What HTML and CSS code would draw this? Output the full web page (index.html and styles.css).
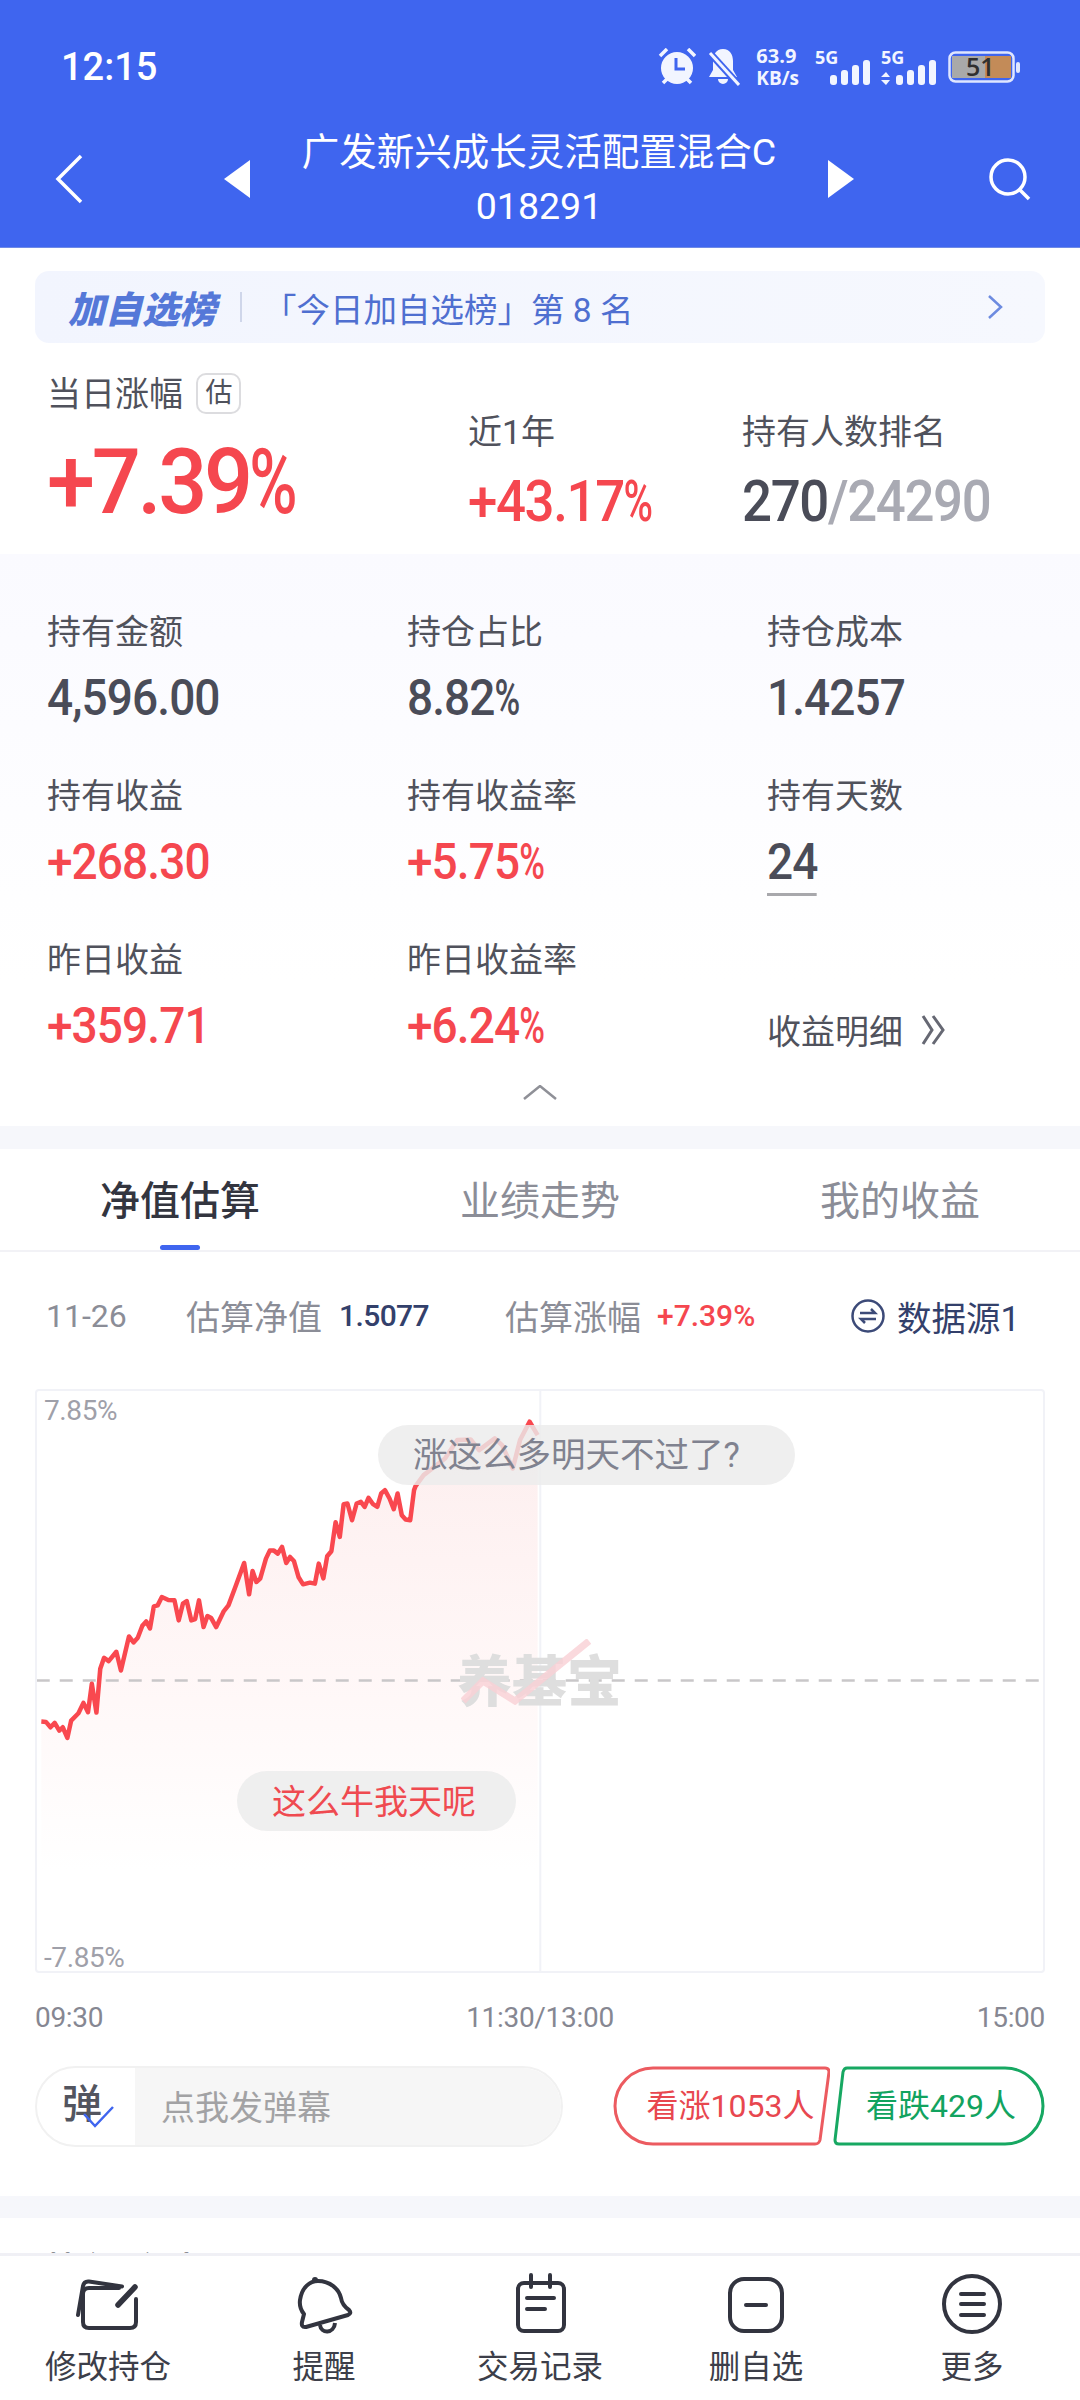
FILE: index.html
```html
<!DOCTYPE html>
<html lang="zh-CN">
<head>
  <meta charset="UTF-8" />
  <title>广发新兴成长灵活配置混合C</title>
  <link rel="stylesheet" href="styles.css">
</head>
<body>

  <header class="top">
    <div class="status-bar">
      <span class="time">12:15</span>
      <div class="status-icons">
        <svg width="38" height="38" viewBox="0 0 38 38">
          <circle cx="19" cy="20" r="16" fill="#f2f5ff"/>
          <path d="M2 8 9 1M30 1l7 7M5 35l4-4M33 35l-4-4" stroke="#f2f5ff" stroke-width="3.5" fill="none"/>
          <path d="M18 10v11h9" stroke="#3f65ef" stroke-width="3" fill="none"/>
        </svg>
        <svg width="32" height="38" viewBox="0 0 32 38">
          <path d="M15 1C8 1 5 7 5 13v9l-4 7h28l-4-7v-9C25 7 22 1 15 1zM10 31a5 5 0 0 0 10 0z" fill="#f2f5ff"/>
          <path d="M1 4l29 32" stroke="#3f65ef" stroke-width="7"/>
          <path d="M2 5l29 32" stroke="#f2f5ff" stroke-width="3"/>
        </svg>
        <div class="speed">
          <span>63.9</span>
          <span class="speed-unit">KB/s</span>
        </div>
        <svg class="signals" width="121" height="41" viewBox="0 -5 121 41">
          <text x="0" y="15">5G</text>
          <text x="66" y="15">5G</text>
          <g fill="#f2f5ff">
            <rect x="15" y="26" width="7" height="10" rx="3"/>
            <rect x="26" y="21" width="7" height="15" rx="3"/>
            <rect x="37" y="16" width="7" height="20" rx="3"/>
            <rect x="48" y="11" width="7" height="25" rx="3"/>
            <rect x="81" y="26" width="7" height="10" rx="3"/>
            <rect x="92" y="21" width="7" height="15" rx="3"/>
            <rect x="103" y="16" width="7" height="20" rx="3"/>
            <rect x="114" y="11" width="7" height="25" rx="3"/>
            <path d="M71 23l4 5h-9zM71 36l4-5h-9z"/>
          </g>
        </svg>
        <svg class="battery" width="72" height="34" viewBox="0 0 72 34">
          <rect x="1.5" y="2.5" width="64" height="29" rx="6" fill="none" stroke="#dfe6ff" stroke-width="2.5"/>
          <rect x="4" y="6" width="33" height="22" fill="#a9a9a9"/>
          <rect x="37" y="6" width="26" height="22" fill="#c38b58"/>
          <rect x="68" y="12" width="4" height="11" rx="2" fill="#dfe6ff"/>
          <text x="18" y="26">51</text>
        </svg>
      </div>
    </div>
    <div class="nav-bar">
      <svg class="back" width="28" height="50" viewBox="0 0 28 50">
        <path d="M26 2 3 25l23 23" fill="none" stroke="#fff" stroke-width="3.5"/>
      </svg>
      <svg class="prev" width="26" height="38" viewBox="0 0 26 38"><path d="M26 0v38L0 19z" fill="#fff"/></svg>
      <div class="fund-title">
        <div>广发新兴成长灵活配置混合C</div>
        <div>018291</div>
      </div>
      <svg class="next" width="26" height="38" viewBox="0 0 26 38"><path d="M0 0v38l26-19z" fill="#fff"/></svg>
      <svg class="search" width="44" height="44" viewBox="0 0 44 44">
        <circle cx="20" cy="20" r="17" fill="none" stroke="#fff" stroke-width="3.5"/>
        <path d="M32 33l9 9" stroke="#fff" stroke-width="3.5"/>
      </svg>
    </div>
  </header>

  <main class="content">
    <section class="summary">
      <div class="rank-banner">
        <span class="rank-logo">加自选榜</span>
        <span class="rank-sep"></span>
        <span class="rank-text">「今日加自选榜」第 8 名</span>
        <svg class="rank-arrow" width="16" height="24" viewBox="0 0 16 24">
          <path d="M2 1l12 11L2 23" fill="none" stroke="#6d8be0" stroke-width="2.5"/>
        </svg>
      </div>
      <div class="summary-stats">
        <div class="stat-main">
          <div class="label">当日涨幅 <span class="chip">估</span></div>
          <div class="big-rate">+7.39<span class="pct">%</span></div>
        </div>
        <div class="stat-side year">
          <div class="label">近1年</div>
          <div class="side-value red">+43.17<span class="pct">%</span></div>
        </div>
        <div class="stat-side">
          <div class="label">持有人数排名</div>
          <div class="side-value">270<span class="muted">/24290</span></div>
        </div>
      </div>
    </section>

    <section class="holdings">
      <div class="holdings-grid">
        <div><div class="label">持有金额</div><div class="value">4,596.00</div></div>
        <div><div class="label">持仓占比</div><div class="value">8.82<span class="pct">%</span></div></div>
        <div><div class="label">持仓成本</div><div class="value">1.4257</div></div>
        <div><div class="label">持有收益</div><div class="value red">+268.30</div></div>
        <div><div class="label">持有收益率</div><div class="value red">+5.75<span class="pct">%</span></div></div>
        <div><div class="label">持有天数</div><div class="value"><span class="underlined">24</span></div></div>
        <div><div class="label">昨日收益</div><div class="value red">+359.71</div></div>
        <div><div class="label">昨日收益率</div><div class="value red">+6.24<span class="pct">%</span></div></div>
        <div class="detail-link">
          <span class="label">收益明细</span>
          <svg width="26" height="32" viewBox="0 0 26 32">
            <path d="M3 2l9 14-9 14M13 2l10 14-10 14" fill="none" stroke="#666873" stroke-width="3"/>
          </svg>
        </div>
      </div>
      <svg class="collapse" width="34" height="15" viewBox="0 0 34 15">
        <path d="M1 14 17 1l16 13" fill="none" stroke="#8f9097" stroke-width="2.5"/>
      </svg>
    </section>

    <div class="band"></div>

    <nav class="tabs">
      <a class="tab active">净值估算</a>
      <a class="tab">业绩走势</a>
      <a class="tab">我的收益</a>
    </nav>

    <div class="estimate-row">
      <span class="est-date">11-26</span>
      <span class="est-label first">估算净值</span>
      <span class="est-nav">1.5077</span>
      <span class="est-label second">估算涨幅</span>
      <span class="est-rate">+7.39%</span>
      <span class="est-source">
        <svg width="36" height="36" viewBox="0 0 36 36">
          <circle cx="18" cy="18" r="15.5" fill="none" stroke="#3c4a78" stroke-width="2.5"/>
          <path d="M10 15h15l-4-4M26 21H11l4 4" fill="none" stroke="#3c4a78" stroke-width="2.5"/>
        </svg>
        数据源1
      </span>
    </div>

    <div class="chart">
      <svg class="chart-plot" viewBox="96.7 123 2629 1737" preserveAspectRatio="none">
        <defs>
          <linearGradient id="area" x1="0" y1="0" x2="0" y2="1">
            <stop offset="0" stop-color="#fdeeee"/>
            <stop offset="0.62" stop-color="#fff8f8"/>
            <stop offset="1" stop-color="#ffffff"/>
          </linearGradient>
        </defs>
        <polygon fill="url(#area)" points="108,1113 120,1114 132,1130 143,1117 155,1140 164,1130 176,1162 186,1110 205,1088 218,1057 230,1085 240,1000 252,1086 262,955 272,922 284,932 304,904 316,960 337,858 349,876 360,862 372,826 382,813 392,834 402,768 412,765 423,740 440,749 456,750 467,810 478,760 488,752 500,810 510,806 520,750 532,830 542,797 552,803 565,830 585,782 597,765 615,710 638,638 651,732 660,662 670,695 680,685 695,625 705,601 716,601 726,610 737,590 748,638 758,620 768,632 780,680 792,702 810,697 823,700 833,640 845,684 855,618 866,603 877,516 888,560 898,462 908,460 920,510 932,460 943,455 953,470 963,443 975,462 986,470 996,430 1006,420 1018,445 1029,477 1039,430 1050,495 1060,508 1072,510 1082,420 1086,408 1107,375 1163,325 1195,270 1230,268 1252,300 1293,265 1312,285 1340,355 1359,270 1384,215 1405,255 1405,1560 108,1560"/>
        <line class="grid-line" x1="1412" y1="123" x2="1412" y2="1860"/>
        <line class="zero-line" x1="96" y1="990" x2="2726" y2="990"/>
        <polyline class="price-line" points="108,1113 120,1114 132,1130 143,1117 155,1140 164,1130 176,1162 186,1110 205,1088 218,1057 230,1085 240,1000 252,1086 262,955 272,922 284,932 304,904 316,960 337,858 349,876 360,862 372,826 382,813 392,834 402,768 412,765 423,740 440,749 456,750 467,810 478,760 488,752 500,810 510,806 520,750 532,830 542,797 552,803 565,830 585,782 597,765 615,710 638,638 651,732 660,662 670,695 680,685 695,625 705,601 716,601 726,610 737,590 748,638 758,620 768,632 780,680 792,702 810,697 823,700 833,640 845,684 855,618 866,603 877,516 888,560 898,462 908,460 920,510 932,460 943,455 953,470 963,443 975,462 986,470 996,430 1006,420 1018,445 1029,477 1039,430 1050,495 1060,508 1072,510 1082,420 1086,408 1107,375 1163,325 1195,270 1230,268 1252,300 1293,265 1312,285 1340,355 1359,270 1384,215 1405,255"/>
      </svg>
      <span class="axis-top">7.85%</span>
      <span class="axis-bottom">-7.85%</span>
      <span class="watermark">养基宝</span>
      <svg class="swoosh" width="130" height="66" viewBox="0 0 130 66">
        <path d="M2 62l20-20 32 20L128 2" fill="none" stroke="#f9d0d4" stroke-opacity="0.8" stroke-width="7"/>
      </svg>
      <span class="danmu danmu-gray">涨这么多明天不过了?</span>
      <span class="danmu danmu-red">这么牛我天呢</span>
    </div>

    <div class="time-axis">
      <span>09:30</span>
      <span>11:30/13:00</span>
      <span>15:00</span>
    </div>

    <div class="action-row">
      <div class="danmu-input">
        <div class="danmu-toggle">
          弹
          <svg class="danmu-check" width="32" height="22" viewBox="0 0 32 22">
            <path d="M1 8l11 12L30 1" fill="none" stroke="#3f65ef" stroke-width="2.5"/>
          </svg>
        </div>
        <div class="danmu-placeholder">点我发弹幕</div>
      </div>
      <div class="votes">
        <div class="vote vote-up">
          <svg width="217" height="80" viewBox="0 0 217 80">
            <path d="M40 2h172q4 0 4 4l-9 68q-1 4-5 4H40a38 38 0 0 1 0-76z" fill="none" stroke="#ec5b60" stroke-width="3"/>
          </svg>
          <span>看涨1053人</span>
        </div>
        <div class="vote vote-down">
          <svg width="212" height="80" viewBox="0 0 212 80">
            <path d="M14 2h158a38 38 0 0 1 0 76H6q-4 0-4-4l8-68q1-4 4-4z" fill="none" stroke="#17a862" stroke-width="3"/>
          </svg>
          <span>看跌429人</span>
        </div>
      </div>
    </div>

    <div class="band band-low"></div>

    <section class="next-section">
      <span class="next-title">持仓明细表</span>
      <span class="next-more">近3月</span>
    </section>
  </main>

  <footer class="bottom-nav">
    <a class="nav-item">
      <svg width="64" height="64" viewBox="0 0 64 64">
        <path d="M60 27v23q0 6-6 6H13q-6 0-6-6V22q0-6 6-6h30" fill="none" stroke="#32343f" stroke-width="4" stroke-linecap="round"/>
        <path d="M2 43 7 14q1-5 6-4.500l33 5" fill="none" stroke="#32343f" stroke-width="4" stroke-linecap="round"/>
        <path d="M42 33l17-18" stroke="#32343f" stroke-width="5.500" stroke-linecap="round"/>
      </svg>
      <span>修改持仓</span>
    </a>
    <a class="nav-item">
      <svg width="64" height="64" viewBox="0 0 64 64">
        <path d="M13 55q-4 0-3-5l2-8Q7 36 8 28C10 15 18 9 26 9c12 0 21 8 23 17q1 7 8 12 3 3-1 5L14 55z" fill="none" stroke="#32343f" stroke-width="4" stroke-linejoin="round"/>
        <path d="M28 53c1 9 14 9 15-2" fill="none" stroke="#32343f" stroke-width="4"/>
        <circle cx="23" cy="8" r="3" fill="#32343f"/>
      </svg>
      <span>提醒</span>
    </a>
    <a class="nav-item">
      <svg width="64" height="64" viewBox="0 0 64 64">
        <rect x="10" y="11" width="46" height="48" rx="6" fill="none" stroke="#32343f" stroke-width="4"/>
        <path d="M23 3v12M42 3v12" stroke="#32343f" stroke-width="4" stroke-linecap="round"/>
        <path d="M19 26h27M19 37h18" stroke="#32343f" stroke-width="4" stroke-linecap="round"/>
      </svg>
      <span>交易记录</span>
    </a>
    <a class="nav-item">
      <svg width="64" height="64" viewBox="0 0 64 64">
        <rect x="6" y="7" width="52" height="52" rx="14" fill="none" stroke="#32343f" stroke-width="4"/>
        <path d="M22 33h20" stroke="#32343f" stroke-width="4" stroke-linecap="round"/>
      </svg>
      <span>删自选</span>
    </a>
    <a class="nav-item">
      <svg width="64" height="64" viewBox="0 0 64 64">
        <circle cx="32" cy="32" r="28" fill="none" stroke="#32343f" stroke-width="4"/>
        <path d="M21 22h23M21 32h23M21 43h23" stroke="#32343f" stroke-width="4" stroke-linecap="round"/>
      </svg>
      <span>更多</span>
    </a>
  </footer>

</body>
</html>
```

FILE: styles.css
```css
* {
  box-sizing: border-box;
}
body {
  margin: 0;
  width: 1080px;
  height: 2400px;
  overflow: hidden;
  display: flex;
  flex-direction: column;
  background: #fff;
  font-family: Roboto, "Noto Sans CJK SC", sans-serif;
  color: #4a4c58;
}
svg {
  display: block;
  flex-shrink: 0;
}

/* header */
.top {
  height: 248px;
  background: #3f65ef;
  border-bottom: 1px solid #6f8ae6;
  color: #fff;
}
.status-bar {
  height: 122px;
  padding: 11px 60px 0 61px;
  display: flex;
  align-items: center;
  justify-content: space-between;
}
.time {
  font-size: 38px;
  font-weight: 500;
}
.status-icons {
  display: flex;
  align-items: center;
  gap: 12px;
}
.speed {
  display: flex;
  flex-direction: column;
  margin: 0 4px;
  font-family: "Open Sans", sans-serif;
  font-size: 20px;
  font-weight: 700;
  line-height: 22px;
  color: #f2f5ff;
}
.speed-unit {
  font-size: 19px;
}
.signals {
  margin-bottom: 5px;
}
.signals text {
  font-family: "Open Sans", sans-serif;
  font-size: 18px;
  font-weight: 700;
  fill: #f2f5ff;
}
.battery text {
  font-family: "Open Sans", sans-serif;
  font-size: 25px;
  font-weight: 600;
  fill: #2f2f2f;
}
.nav-bar {
  display: flex;
  align-items: center;
  padding: 3px 48px 12px 55px;
}
.prev {
  margin-left: 141px;
}
.fund-title {
  width: 580px;
  text-align: center;
  font-size: 37.5px;
  line-height: 54px;
  white-space: nowrap;
}
.search {
  margin-left: 134px;
}

/* summary */
.content {
  flex: 1;
  overflow: hidden;
}
.summary {
  height: 306px;
  padding-top: 23px;
}
.rank-banner {
  height: 72px;
  margin: 0 35px;
  padding: 0 42px 0 33px;
  display: flex;
  align-items: center;
  border-radius: 14px;
  background: linear-gradient(90deg, #f2f5fe, #f6f8fe);
}
.rank-logo {
  font-size: 37px;
  font-weight: 900;
  font-style: italic;
  color: #5578d8;
}
.rank-sep {
  width: 2px;
  height: 30px;
  margin: 0 21px 0 24px;
  background: #cfd6ea;
}
.rank-text {
  font-size: 33.5px;
  color: #4f6fd0;
}
.rank-arrow {
  margin-left: auto;
}
.summary-stats {
  display: flex;
  padding: 30px 0 0 47px;
}
.label {
  font-size: 34px;
  line-height: 42px;
  color: #50525c;
  white-space: nowrap;
}
.chip {
  display: inline-block;
  width: 45px;
  height: 41px;
  margin-left: 5px;
  border: 2px solid #dcdcdf;
  border-radius: 10px;
  font-size: 27px;
  line-height: 36px;
  text-align: center;
  vertical-align: top;
}
.stat-main {
  width: 421px;
}
.big-rate {
  margin-top: 17px;
  font-size: 91px;
  font-weight: 500;
  line-height: 100px;
  letter-spacing: -3.5px;
  color: #f5474f;
  transform: scaleX(0.95);
  transform-origin: left;
}
.pct {
  display: inline-block;
  transform: scaleX(0.76);
  transform-origin: left;
}
.stat-side {
  padding-top: 38px;
}
.stat-side.year {
  width: 274px;
}
.side-value {
  margin-top: 18px;
  font-size: 58px;
  font-weight: 500;
  line-height: 60px;
  letter-spacing: -1.5px;
  transform: scaleX(0.91);
  transform-origin: left;
}
.red {
  color: #f5474f;
}
.muted {
  color: #a9aab3;
}

/* holdings */
.holdings {
  height: 572px;
  padding: 57px 0 0 47px;
  background: linear-gradient(180deg, #fafaff, #fff 75%);
}
.holdings-grid {
  display: grid;
  grid-template-columns: repeat(3, 360px);
  grid-auto-rows: 116px;
  row-gap: 48px;
}
.value {
  margin-top: 15px;
  font-size: 50px;
  font-weight: 500;
  line-height: 60px;
  letter-spacing: -1px;
  transform: scaleX(0.92);
  transform-origin: left;
}
.underlined {
  display: inline-block;
  box-sizing: content-box;
  width: 54px;
  height: 61px;
  border-bottom: 3px solid #a8a8ac;
}
.detail-link {
  display: flex;
  align-items: flex-end;
  gap: 17px;
  padding-bottom: 2px;
}
.detail-link svg {
  margin-bottom: 7px;
}
.collapse {
  margin: 30px 0 0 476px;
}
.band {
  height: 23px;
  background: #f6f7fb;
}

/* tabs */
.tabs {
  height: 103px;
  display: flex;
  border-bottom: 2px solid #f2f2f6;
}
.tab {
  position: relative;
  width: 360px;
  text-align: center;
  font-size: 40px;
  line-height: 106px;
  color: #8b8d97;
}
.tab.active {
  font-weight: 500;
  color: #33353f;
}
.tab.active::after {
  content: "";
  position: absolute;
  left: 160px;
  bottom: 0;
  width: 40px;
  height: 5px;
  border-radius: 3px;
  background: #3f65ef;
}

/* estimate row */
.estimate-row {
  height: 137px;
  padding: 0 60px 10px 46px;
  display: flex;
  align-items: center;
  font-size: 34px;
  color: #8b8d97;
}
.est-date {
  width: 140px;
  font-size: 32px;
}
.est-nav {
  margin-left: 17px;
  width: 91px;
  font-size: 30px;
  font-weight: 500;
  letter-spacing: -0.6px;
  color: #33406b;
}
.est-label.second {
  margin-left: 75px;
}
.est-rate {
  margin-left: 16px;
  font-size: 30px;
  font-weight: 500;
  color: #f5474f;
}
.est-source {
  margin-left: auto;
  display: flex;
  align-items: center;
  gap: 11px;
  font-size: 34.500px;
  color: #33406b;
}

/* chart */
.chart {
  position: relative;
  height: 584px;
  margin: 0 35px;
  border: 2px solid #f1f2f7;
  border-radius: 4px;
}
.chart-plot {
  position: absolute;
  inset: 0;
  width: 100%;
  height: 100%;
}
.grid-line {
  stroke: #f1f2f7;
  stroke-width: 2;
  vector-effect: non-scaling-stroke;
}
.zero-line {
  stroke: #c9c7c9;
  stroke-width: 2.5;
  stroke-dasharray: 13 10;
  vector-effect: non-scaling-stroke;
}
.price-line {
  fill: none;
  stroke: #f9484f;
  stroke-width: 4.5;
  stroke-linejoin: round;
  vector-effect: non-scaling-stroke;
}
.swoosh {
  position: absolute;
  left: 424px;
  top: 248px;
}
.axis-top,
.axis-bottom {
  position: absolute;
  left: 7px;
  font-size: 28px;
  line-height: 32px;
  letter-spacing: -0.4px;
  color: #9fa0a9;
}
.axis-top {
  top: 4px;
}
.axis-bottom {
  bottom: -3px;
}
.watermark {
  position: absolute;
  left: 420px;
  top: 256px;
  font-size: 55px;
  font-weight: 900;
  line-height: 70px;
  color: #dedede;
}
.danmu {
  position: absolute;
  height: 60px;
  border-radius: 30px;
  background: rgba(236, 236, 236, 0.82);
  font-size: 34px;
  line-height: 60px;
  white-space: nowrap;
}
.danmu-gray {
  left: 341px;
  top: 34px;
  width: 417px;
  padding-left: 35px;
  font-size: 34.500px;
  color: #80828f;
}
.danmu-red {
  left: 200px;
  top: 380px;
  width: 279px;
  padding-left: 35px;
  line-height: 63px;
  color: #ef4a50;
}
.time-axis {
  margin-top: 24px;
  padding: 0 35px;
  display: flex;
  justify-content: space-between;
  font-size: 28px;
  line-height: 42px;
  letter-spacing: -0.3px;
  color: #868792;
}

/* danmu input and votes */
.action-row {
  height: 81px;
  margin: 27px 35px 49px;
  display: flex;
  justify-content: space-between;
}
.danmu-input {
  width: 528px;
  display: flex;
  border: 2px solid #f1f1f1;
  border-radius: 41px;
  overflow: hidden;
}
.danmu-toggle {
  position: relative;
  width: 98px;
  padding-left: 25px;
  font-size: 40px;
  font-weight: 500;
  line-height: 74px;
  color: #53555f;
}
.danmu-check {
  position: absolute;
  left: 46px;
  top: 38px;
}
.danmu-placeholder {
  flex: 1;
  padding-left: 26px;
  background: #f6f6f6;
  font-size: 34px;
  line-height: 80px;
  color: #a2a2a4;
}
.votes {
  display: flex;
  gap: 3px;
}
.vote {
  position: relative;
  height: 80px;
  text-align: center;
  font-size: 32px;
  line-height: 80px;
  white-space: nowrap;
}
.vote svg {
  position: absolute;
  left: 0;
  top: 0;
}
.vote-up {
  width: 217px;
  padding-left: 18px;
  color: #e8474f;
}
.vote-down {
  width: 212px;
  padding-left: 4px;
  color: #12a35f;
}
.band-low {
  height: 22px;
}
.next-section {
  padding: 30px 47px 0;
  display: flex;
  justify-content: space-between;
}
.next-title {
  font-size: 31px;
  font-weight: 700;
  line-height: 42px;
  color: #33353f;
}
.next-more {
  font-size: 28px;
  line-height: 42px;
  padding-right: 6px;
  color: #8b8d97;
}

/* bottom nav */
.bottom-nav {
  height: 147px;
  padding-top: 16px;
  display: flex;
  background: #fff;
  border-top: 3px solid #f0f0f5;
}
.nav-item {
  width: 216px;
  display: flex;
  flex-direction: column;
  align-items: center;
  gap: 11px;
  font-size: 31.500px;
  line-height: 42px;
  color: #3c3e49;
}
```
